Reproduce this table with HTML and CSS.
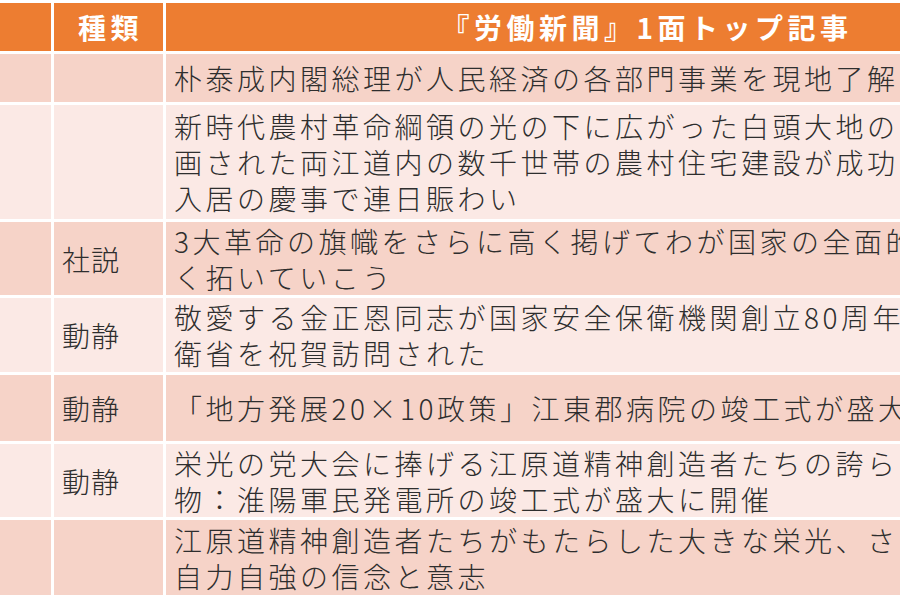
FILE: index.html
```html
<!DOCTYPE html>
<html lang="ja">
<head>
<meta charset="utf-8">
<title>『労働新聞』1面トップ記事</title>
<link rel="stylesheet" href="styles.css">
</head>
<body>
<table class="news">
  <colgroup>
    <col class="c-a">
    <col class="c-b">
    <col class="c-c">
  </colgroup>
  <thead>
    <tr class="head">
      <th></th>
      <th class="kind-h">種類</th>
      <th class="title-h">『労働新聞』1面トップ記事</th>
    </tr>
  </thead>
  <tbody>
    <tr class="odd h1">
      <td></td><td></td>
      <td>朴泰成内閣総理が人民経済の各部門事業を現地了解</td>
    </tr>
    <tr class="even h2">
      <td></td><td></td>
      <td>新時代農村革命綱領の光の下に広がった白頭大地の<br>画された両江道内の数千世帯の農村住宅建設が成功<br>入居の慶事で連日賑わい</td>
    </tr>
    <tr class="odd h3">
      <td></td><td class="kind">社説</td>
      <td>3大革命の旗幟をさらに高く掲げてわが国家の全面的<br>く拓いていこう</td>
    </tr>
    <tr class="even h4">
      <td></td><td class="kind">動静</td>
      <td>敬愛する金正恩同志が国家安全保衛機関創立80周年<br>衛省を祝賀訪問された</td>
    </tr>
    <tr class="odd h5">
      <td></td><td class="kind">動静</td>
      <td>「地方発展20×10政策」江東郡病院の竣工式が盛大</td>
    </tr>
    <tr class="even h6">
      <td></td><td class="kind">動静</td>
      <td>栄光の党大会に捧げる江原道精神創造者たちの誇ら<br>物：淮陽軍民発電所の竣工式が盛大に開催</td>
    </tr>
    <tr class="odd h7">
      <td></td><td></td>
      <td>江原道精神創造者たちがもたらした大きな栄光、さ<br>自力自強の信念と意志</td>
    </tr>
  </tbody>
</table>
</body>
</html>
```

FILE: styles.css
```css
html, body {
  margin: 0;
  padding: 0;
  background: #ffffff;
  overflow: hidden;
  width: 900px;
  height: 600px;
}

.news {
  table-layout: fixed;
  width: 1130px;
  border-collapse: separate;
  border-spacing: 3px;
  margin-left: -3px;
  font-family: "Noto Sans CJK JP", "Noto Sans", sans-serif;
  color: #2e2e2e;
}

.c-a { width: 51px; }
.c-b { width: 109px; }
.c-c { width: 958px; }

.news th,
.news td {
  padding: 0 0 0 8px;
  vertical-align: middle;
  white-space: nowrap;
  overflow: hidden;
}

.head th {
  background: #ed7d31;
  color: #ffffff;
  font-size: 28px;
  font-weight: 700;
  letter-spacing: 4.5px;
  height: 48px;
  line-height: 46px;
  text-align: center;
  padding: 0 0 0 4px;
}

.news td {
  font-size: 28px;
  line-height: 36px;
  letter-spacing: 3.5px;
  font-weight: 300;
}

.odd td { background: #f6d3c8; }
.even td { background: #fbe9e5; }

.h1 td { height: 48px; }
.h2 td { height: 114px; }
.h3 td { height: 73px; }
.h4 td { height: 74px; }
.h5 td { height: 66px; }
.h6 td { height: 73px; }
.h7 td { height: 75px; }

.news td.kind {
  padding-left: 8px;
  letter-spacing: 1px;
}
```
